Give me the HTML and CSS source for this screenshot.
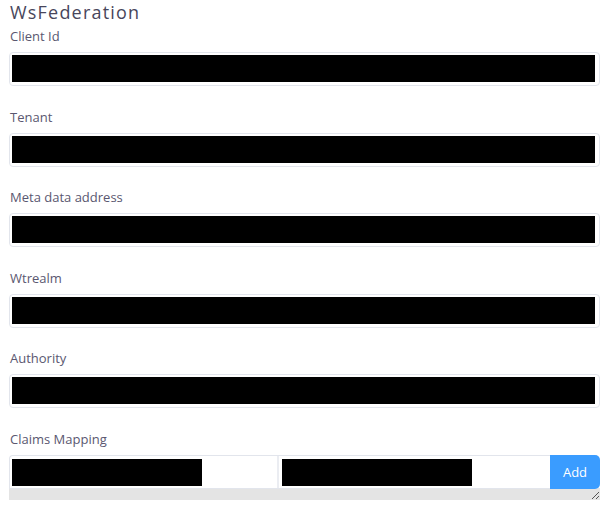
FILE: index.html
```html
<!DOCTYPE html>
<html>
<head>
<meta charset="utf-8">
<link rel="stylesheet" href="styles.css">
</head>
<body>
<div class="page">
  <h3 class="title">WsFederation</h3>
  <div class="field">
    <label class="label">Client Id</label>
    <div class="input"><div class="redact"></div></div>
  </div>
  <div class="field">
    <label class="label">Tenant</label>
    <div class="input"><div class="redact"></div></div>
  </div>
  <div class="field">
    <label class="label">Meta data address</label>
    <div class="input"><div class="redact"></div></div>
  </div>
  <div class="field">
    <label class="label">Wtrealm</label>
    <div class="input"><div class="redact"></div></div>
  </div>
  <div class="field">
    <label class="label">Authority</label>
    <div class="input"><div class="redact"></div></div>
  </div>
  <div class="field claims">
    <label class="label">Claims Mapping</label>
    <div class="group">
      <div class="part first"><div class="redact short"></div></div>
      <div class="part second"><div class="redact short"></div></div>
      <button class="add">Add</button>
    </div>
    <div class="tray">
      <svg class="grip" width="9" height="9" viewBox="0 0 9 9"><path d="M8 1 L1 8 M8 5 L5 8" stroke="#555" stroke-width="1"/></svg>
    </div>
  </div>
</div>
</body>
</html>
```
FILE: styles.css
```css
* { box-sizing: border-box; }
html, body { margin: 0; padding: 0; background: #fff; }
body { font-family: "Open Sans", "Noto Sans", sans-serif; }
.page { padding: 0 13px 0 9px; }
.title {
  margin: 0 0 2px 0;
  font-size: 18px;
  line-height: 24px;
  font-weight: 500;
  letter-spacing: 1.2px;
  color: #48465b;
  padding-left: 1px;
}
.field { display: flex; flex-direction: column; margin-bottom: 20.6px; }
.label {
  font-size: 13px;
  line-height: 20px;
  color: #5a5770;
  padding-left: 1px;
  margin-bottom: 6px;
}
.input {
  height: 34px;
  border: 1px solid #e2e5ec;
  border-radius: 4px;
  padding: 2px 4px 3px 2px;
  background: #fff;
}
.redact { background: #000; height: 27px; }
.group {
  display: flex;
  height: 34px;
  border: 1px solid #e2e5ec;
  border-right: none;
  border-radius: 4px 5px 0 0;
  background: #fff;
}
.part { flex: 0 0 auto; padding: 3px 0 2px 2px; }
.part.first { width: 269px; border-right: 2px solid #ebedf2; }
.part.second { width: 271px; padding-left: 3px; }
.short { width: 190px; height: 27px; }
.add {
  flex: 1;
  margin: -1px 0 0 0;
  height: 34px;
  border: none;
  border-radius: 0 5px 5px 0;
  background: #3a9cff;
  color: #fff;
  font-family: inherit;
  font-size: 13px;
  padding: 0;
}
.tray {
  height: 11px;
  background: #e4e4e4;
  position: relative;
}
.grip { position: absolute; right: 0; bottom: 0; }
```
